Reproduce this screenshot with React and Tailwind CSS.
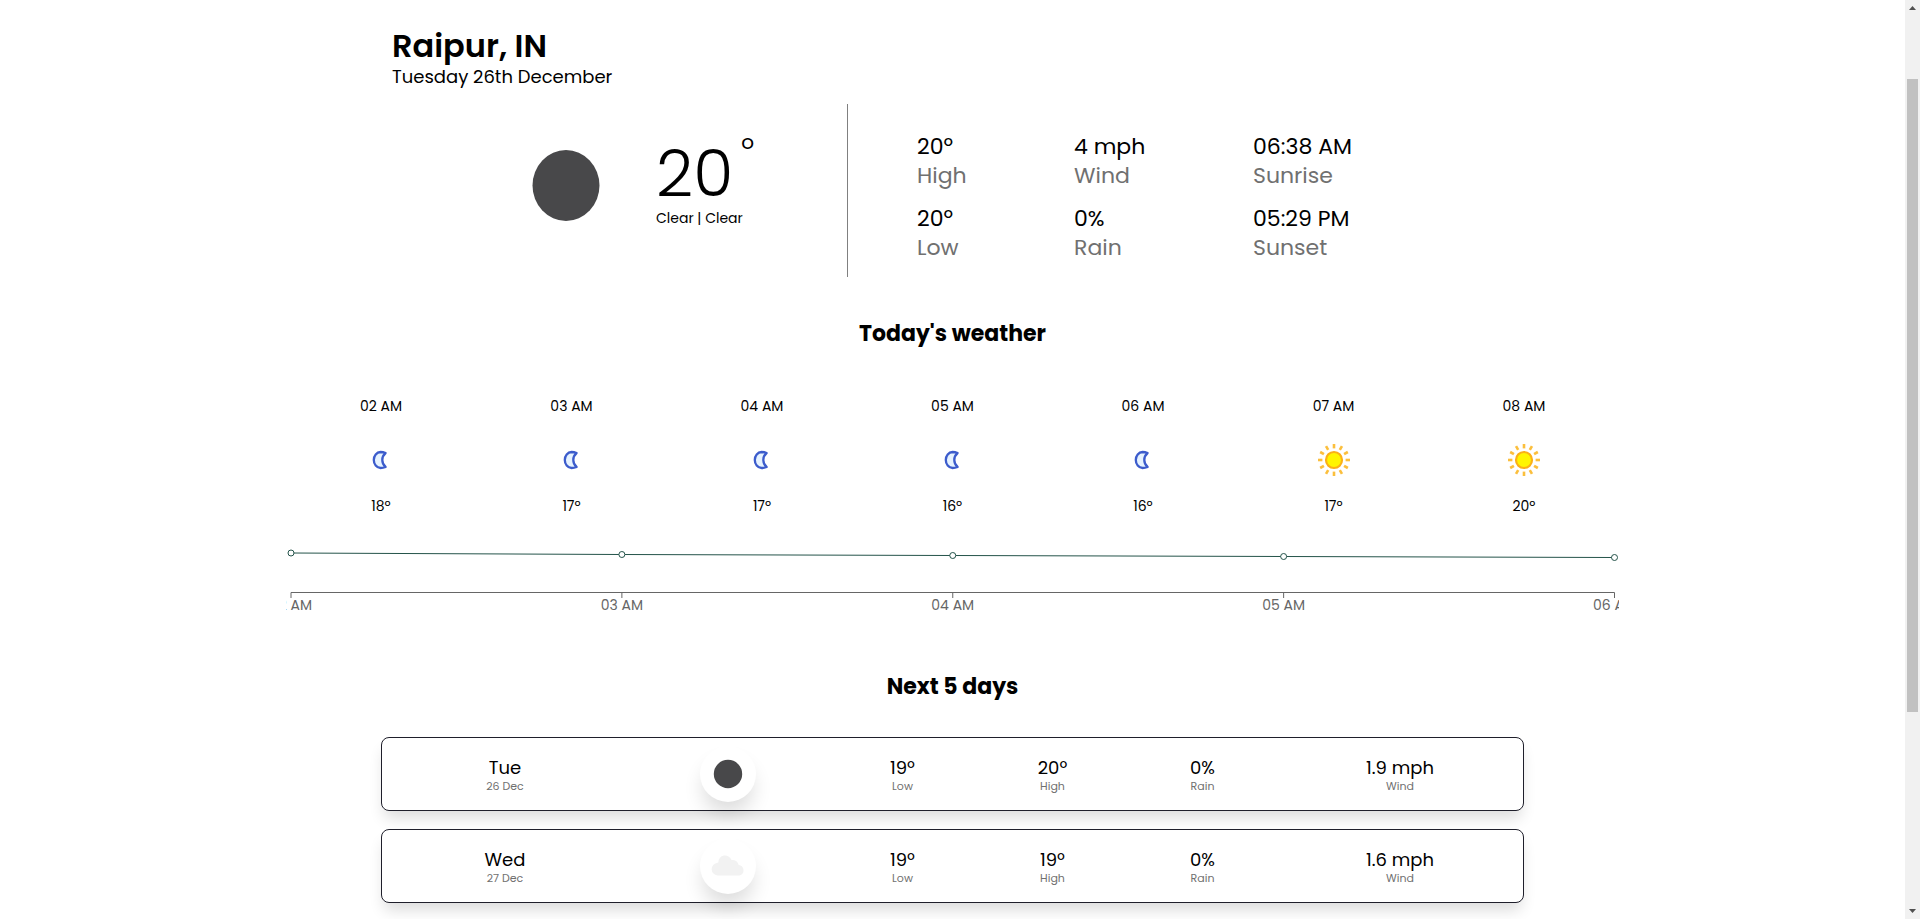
const details = [
  ["20º", "High"],
  ["4 mph", "Wind"],
  ["06:38 AM", "Sunrise"],
  ["20º", "Low"],
  ["0%", "Rain"],
  ["05:29 PM", "Sunset"],
];

const hours = [
  { time: "02 AM", icon: "moon", temp: "18º" },
  { time: "03 AM", icon: "moon", temp: "17º" },
  { time: "04 AM", icon: "moon", temp: "17º" },
  { time: "05 AM", icon: "moon", temp: "16º" },
  { time: "06 AM", icon: "moon", temp: "16º" },
  { time: "07 AM", icon: "sun", temp: "17º" },
  { time: "08 AM", icon: "sun", temp: "20º" },
];

const points = [
  { label: "02 AM", x: 0, y: 13 },
  { label: "03 AM", x: 25, y: 14.5 },
  { label: "04 AM", x: 50, y: 15.5 },
  { label: "05 AM", x: 75, y: 16.5 },
  { label: "06 AM", x: 100, y: 17.5 },
];

const days = [
  { day: "Tue", date: "26 Dec", icon: "clear", low: "19º", high: "20º", rain: "0%", wind: "1.9 mph" },
  { day: "Wed", date: "27 Dec", icon: "cloud", low: "19º", high: "19º", rain: "0%", wind: "1.6 mph" },
];

function Moon() {
  return (
    <svg viewBox="0 0 40 40" className="size-10" aria-hidden="true">
      <path
        d="M24.6 13 C22.6 12.2 21 12 19.6 12 C15.6 12.2 12.8 15.8 12.8 20 C12.8 24.2 15.6 27.8 19.6 28 C21 28 22.6 27.8 24.6 27 C20.2 23.4 20.2 16.6 24.6 13 Z"
        fill="#e6f3ff"
        stroke="#3c5ccc"
        strokeWidth="2.3"
        strokeLinejoin="round"
      />
    </svg>
  );
}

function Sun() {
  return (
    <svg viewBox="0 0 40 40" className="size-10" aria-hidden="true">
      {Array.from({ length: 12 }, (_, i) => (
        <path key={i} d="M20 4v4.4" stroke="#fbbf3d" strokeWidth="2.6" transform={`rotate(${i * 30} 20 20)`} />
      ))}
      <circle cx="20" cy="20" r="8" fill="#fff500" stroke="#fbb016" strokeWidth="2.2" />
    </svg>
  );
}

function DayIcon({ kind }) {
  return (
    <svg viewBox="0 0 56 56" className="size-14" aria-hidden="true">
      {kind === "clear" ? (
        <circle cx="28" cy="28" r="14.2" fill="#48484a" />
      ) : (
        <path
          d="M17.5 37.5a6.3 6.3 0 0 1-.6-12.5 4.6 4.6 0 0 1 1.4-.6 6.8 6.8 0 0 1 13.2-2.4 6.5 6.5 0 0 1 7.2 5 5.4 5.4 0 0 1 1.1 10.5z"
          fill="#f2f2f2"
        />
      )}
    </svg>
  );
}

function Stat({ value, label }) {
  return (
    <div className="pt-1 text-center">
      <p className="text-lg leading-5">{value}</p>
      <p className="text-[11px] leading-4 text-[#707070]">{label}</p>
    </div>
  );
}

export default function App() {
  return (
    <div className="flex h-screen overflow-hidden bg-white font-[Poppins,Inter,sans-serif] text-black">
      <main className="min-w-0 flex-1">
        <header className="mx-auto w-3/5 px-[11px] pt-[26px]">
          <h1 className="text-[32px] leading-10 font-semibold">Raipur, IN</h1>
          <p className="text-lg leading-[22px]">Tuesday 26th December</p>
        </header>

        <section className="mx-auto mt-4 flex w-3/5">
          <div className="flex flex-1 pl-[151px]">
            <svg viewBox="0 0 68 72" className="mt-[46px] h-[72px] w-[68px]" aria-hidden="true">
              <ellipse cx="34" cy="35.5" rx="33.5" ry="35.5" fill="#48484a" />
            </svg>
            <div className="mt-7 ml-14">
              <div className="flex">
                <span className="mt-[7px] text-[65px] leading-[70px] font-light">20</span>
                <span className="ml-2 text-xl leading-5">o</span>
              </div>
              <p className="text-sm leading-[18px]">Clear | Clear</p>
            </div>
          </div>
          <div className="h-[173px] w-px bg-[#808080]" />
          <dl className="grid w-[676px] grid-cols-[157px_179px_1fr] content-start gap-y-3.5 pt-7 pl-[69px] text-[22px] leading-[29px]">
            {details.map(([value, label]) => (
              <div key={label} className="flex flex-col-reverse">
                <dt className="text-[#707070]">{label}</dt>
                <dd>{value}</dd>
              </div>
            ))}
          </dl>
        </section>

        <h2 className="mt-[41px] text-center text-[22px] leading-8 font-bold">Today's weather</h2>

        <section className="mx-auto mt-[46px] w-7/10">
          <ul className="grid grid-cols-7">
            {hours.map((h) => (
              <li key={h.time} className="flex flex-col items-center text-sm leading-5">
                <span>{h.time}</span>
                <span className="mt-6 mb-4">{h.icon === "moon" ? <Moon /> : <Sun />}</span>
                <span>{h.temp}</span>
              </li>
            ))}
          </ul>
          <div className="mt-6 overflow-hidden px-[5px]">
            <svg className="h-20 w-full overflow-visible" role="img" aria-label="Temperature by hour">
              <g stroke="#24534a">
                {points.slice(1).map((p, i) => (
                  <line key={p.label} x1={`${points[i].x}%`} y1={points[i].y} x2={`${p.x}%`} y2={p.y} />
                ))}
                {points.map((p) => (
                  <circle key={p.label} cx={`${p.x}%`} cy={p.y} r="3" fill="#fff" />
                ))}
              </g>
              <g stroke="#666">
                <line x1="0%" y1="52.5" x2="100%" y2="52.5" />
                {points.map((p) => (
                  <line key={p.label} x1={`${p.x}%`} y1="52.5" x2={`${p.x}%`} y2="58" />
                ))}
              </g>
              {points.map((p) => (
                <text key={p.label} x={`${p.x}%`} y="70" textAnchor="middle" fill="#666" className="text-sm">
                  {p.label}
                </text>
              ))}
            </svg>
          </div>
        </section>

        <h2 className="mt-[51px] text-center text-[22px] leading-8 font-bold">Next 5 days</h2>

        <ul className="mx-auto mt-[34px] flex w-3/5 flex-col gap-[18px]">
          {days.map((d) => (
            <li
              key={d.day}
              className="grid h-[74px] grid-cols-[246fr_200fr_149fr_151fr_149fr_246fr] items-center rounded-lg border border-[#1f1f2b] bg-white shadow-[0_10px_15px_-3px_rgba(0,0,0,0.14)]"
            >
              <Stat value={d.day} label={d.date} />
              <div className="justify-self-center rounded-full bg-white shadow-[0_14px_20px_-3px_rgba(0,0,0,0.14)]">
                <DayIcon kind={d.icon} />
              </div>
              <Stat value={d.low} label="Low" />
              <Stat value={d.high} label="High" />
              <Stat value={d.rain} label="Rain" />
              <Stat value={d.wind} label="Wind" />
            </li>
          ))}
        </ul>
      </main>

      <div className="flex w-[15px] flex-col items-center bg-[#f1f1f1]" aria-hidden="true">
        <svg viewBox="0 0 7 4" className="mt-[6px] h-1 w-[7px]">
          <path d="M3.5 0 7 4H0z" fill="#505050" />
        </svg>
        <div className="mt-[69px] h-[633px] w-[11px] bg-[#c1c1c1]" />
        <svg viewBox="0 0 7 4" className="mt-auto mb-[6px] h-1 w-[7px]">
          <path d="M0 0h7L3.5 4z" fill="#505050" />
        </svg>
      </div>
    </div>
  );
}
